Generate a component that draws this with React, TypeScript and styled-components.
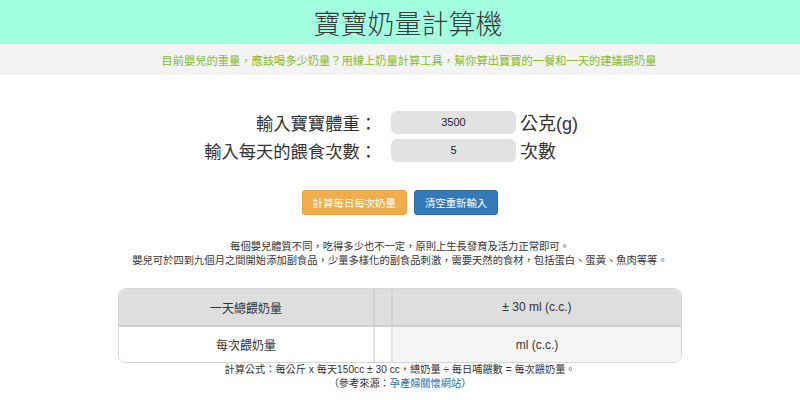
import React from "react";
import styled, { createGlobalStyle } from "styled-components";

const Global = createGlobalStyle`
  html, body { margin: 0; padding: 0; background: #fff; }
  body { font-family: "Liberation Sans", "Noto Sans CJK TC", sans-serif; color: #333; }
  * { box-sizing: border-box; }
`;

const cjk = `"Liberation Sans", "Noto Sans CJK TC", sans-serif`;

const Header = styled.header`
  height: 44px;
  background: #a2ffe0;
  display: flex;
  align-items: center;
  justify-content: center;
  padding-left: 16px;
`;

const Title = styled.h1`
  margin: 0;
  font-family: ${cjk};
  font-weight: 300;
  font-size: 27px;
  color: #3a3a3a;
`;

const Intro = styled.div`
  height: 31px;
  background: #f3f3f3;
  display: flex;
  align-items: center;
  justify-content: center;
  padding-left: 18px;
  font-size: 11.25px;
  color: #86bc25;
  font-family: ${cjk};
`;

const Form = styled.div`
  margin-top: 34px;
  display: grid;
  grid-template-columns: 391px 125px 1fr;
  row-gap: 2px;
  align-items: center;
`;

const Label = styled.label`
  text-align: right;
  padding-right: 14px;
  font-size: 17.3px;
  color: #333;
  font-family: ${cjk};
`;

const Input = styled.input`
  width: 125px;
  height: 23px;
  border: none;
  border-radius: 6px;
  background: #e2e2e2;
  text-align: center;
  font-family: "Liberation Sans", sans-serif;
  font-size: 11px;
  color: #222;
  outline: none;
`;

const Unit = styled.span`
  padding-left: 4px;
  font-size: 18px;
  color: #333;
  font-family: ${cjk};
`;

const Buttons = styled.div`
  margin-top: 27px;
  display: flex;
  justify-content: center;
  gap: 7px;
  padding-left: 0;
`;

const Button = styled.button<{ $tone: "orange" | "blue" }>`
  height: 25px;
  padding: 0 10px;
  border-radius: 3px;
  border: 1px solid ${(p) => (p.$tone === "orange" ? "#eea236" : "#2e6da4")};
  background: ${(p) => (p.$tone === "orange" ? "#f0ad4e" : "#337ab7")};
  color: #fff;
  font-size: 10.4px;
  font-family: ${cjk};
  cursor: pointer;
`;

const Notes = styled.div`
  margin-top: 25px;
  text-align: center;
  font-size: 10.3px;
  line-height: 14px;
  color: #333;
  font-family: ${cjk};
`;

const TableWrap = styled.div`
  margin: 20px auto 0;
  width: 564px;
  border: 1px solid #d6d6d6;
  border-radius: 8px;
  overflow: hidden;
`;

const Table = styled.table`
  width: 100%;
  border-collapse: collapse;
  font-family: ${cjk};
  font-size: 12px;
  color: #333;
`;

const Row = styled.tr<{ $head?: boolean }>`
  height: ${(p) => (p.$head ? "37px" : "36px")};
  background: ${(p) => (p.$head ? "#dedede" : "#fff")};
  border-bottom: ${(p) => (p.$head ? "2px solid #cfcfcf" : "none")};
`;

const Cell = styled.td<{ $w?: string; $bg?: string; $line?: string }>`
  width: ${(p) => p.$w || "auto"};
  text-align: center;
  padding: 0;
  background: ${(p) => p.$bg || "transparent"};
  border-right: ${(p) => (p.$line ? `2px solid ${p.$line}` : "none")};
`;

const Footer = styled.div`
  margin-top: 0;
  text-align: center;
  font-size: 10.2px;
  line-height: 14px;
  color: #333;
  font-family: ${cjk};
`;

const Link = styled.a`
  color: #2a6fb0;
  text-decoration: none;
`;

export default function App() {
  return (
    <>
      <Global />
      <Header>
        <Title>寶寶奶量計算機</Title>
      </Header>
      <Intro>目前嬰兒的重量，應該喝多少奶量？用線上奶量計算工具，幫你算出寶寶的一餐和一天的建議餵奶量</Intro>
      <Form>
        <Label>輸入寶寶體重：</Label>
        <Input defaultValue="3500" />
        <Unit>公克(g)</Unit>
        <Label>輸入每天的餵食次數：</Label>
        <Input defaultValue="5" />
        <Unit>次數</Unit>
      </Form>
      <Buttons>
        <Button $tone="orange">計算每日每次奶量</Button>
        <Button $tone="blue">清空重新輸入</Button>
      </Buttons>
      <Notes>
        每個嬰兒體質不同，吃得多少也不一定，原則上生長發育及活力正常即可。
        <br />
        嬰兒可於四到九個月之間開始添加副食品，少量多樣化的副食品刺激，需要天然的食材，包括蛋白、蛋黃、魚肉等等。
      </Notes>
      <TableWrap>
        <Table>
          <tbody>
            <Row $head>
              <Cell $w="255px" $line="#cfcfcf">一天總餵奶量</Cell>
              <Cell $w="18px" $line="#cfcfcf"></Cell>
              <Cell>± 30 ml (c.c.)</Cell>
            </Row>
            <Row>
              <Cell $w="255px" $line="#e6e6e6">每次餵奶量</Cell>
              <Cell $w="18px" $line="#e6e6e6"></Cell>
              <Cell $bg="#f5f5f5">ml (c.c.)</Cell>
            </Row>
          </tbody>
        </Table>
      </TableWrap>
      <Footer>
        計算公式：每公斤 x 每天150cc ± 30 cc，總奶量 ÷ 每日哺餵數 = 每次餵奶量。
        <br />
        （參考來源：<Link href="#">孕產婦關懷網站</Link>）
      </Footer>
    </>
  );
}
